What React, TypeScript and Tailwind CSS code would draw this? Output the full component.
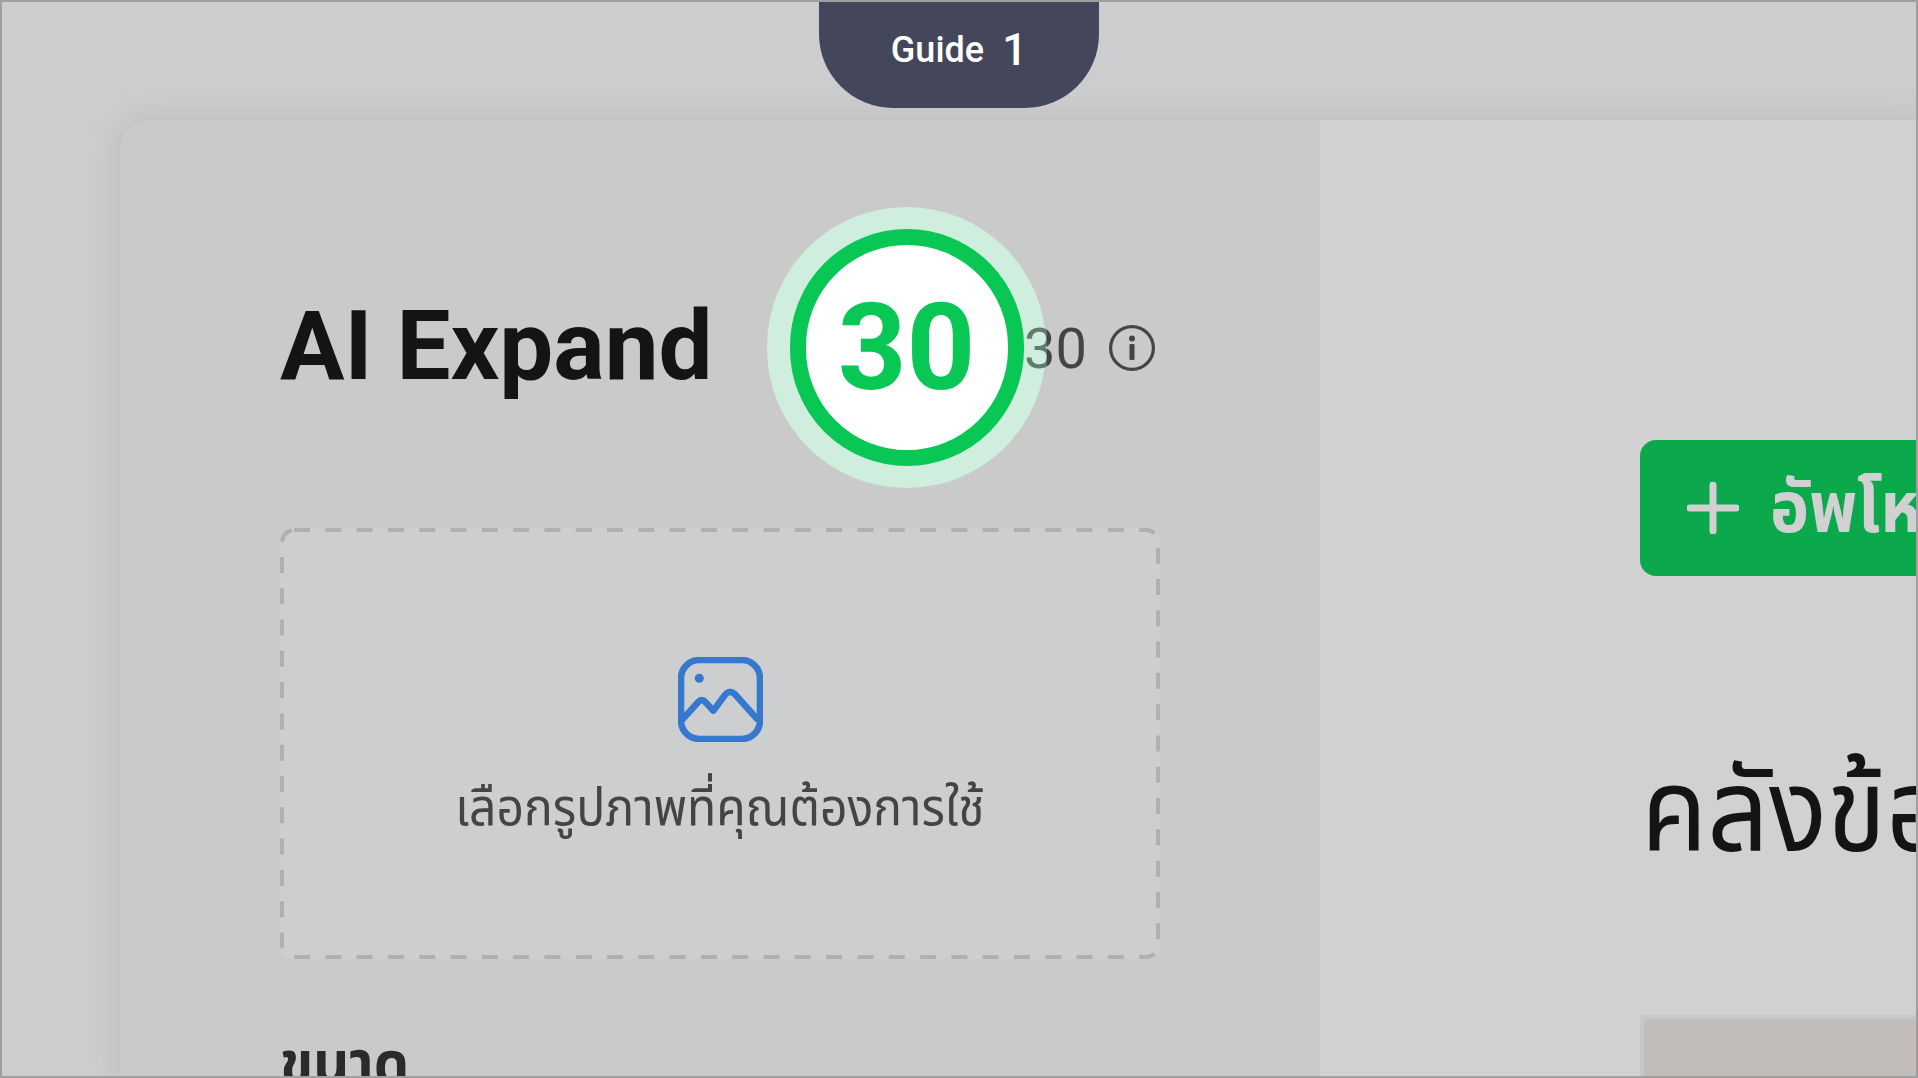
export default function App() {
  const thai = { fontFamily: '"Noto Sans Thai", "Noto Sans", "Noto Sans CJK SC", "DejaVu Sans", sans-serif' }

  return (
    <div className="w-[1918px] h-[1078px] overflow-hidden border-2 border-[#9f9f9f] bg-[#cdcdcf] font-['Roboto',sans-serif]">
      {/* guide tab */}
      <div className="flex justify-center">
        <div className="w-[280px] h-[106px] bg-[#44475c] rounded-b-[74px] flex items-center justify-center gap-[18px] text-white pb-[10px]">
          <span className="text-[36px] font-medium leading-none">Guide</span>
          <span className="text-[44px] font-medium leading-none">1</span>
        </div>
      </div>

      <div className="mt-[12px] ml-[118px] w-[1800px] h-[960px] flex rounded-tl-[30px] shadow-[0_0_30px_rgba(150,150,160,0.35)]">
        {/* left panel */}
        <div className="w-[1200px] shrink-0 bg-[#cacaca] rounded-tl-[30px] pl-[160px] pt-[86px]">
          <div className="flex items-center h-[282px]">
            <h1 className="w-[487px] mb-[3px] text-[#141414] text-[96px] font-bold leading-none">AI Expand</h1>
            <div className="w-[279px] h-[281px] rounded-full bg-[#d0eede] flex items-center justify-center">
              <div className="w-[234px] h-[237px] rounded-full border-[16px] border-[#08c755] bg-white flex items-center justify-center pt-[2px]">
                <span className="text-[#08c755] text-[120px] font-bold leading-none">30</span>
              </div>
            </div>
            <span className="relative ml-[-22px] mt-[3px] text-[56px] leading-none text-transparent bg-clip-text bg-[linear-gradient(90deg,#5f7d6c_23px,#444444_23px)]">30</span>
            <svg className="ml-[22px] mt-[1px]" width="46" height="46" viewBox="0 0 46 46" fill="none">
              <circle cx="23" cy="23" r="21.4" stroke="#444444" strokeWidth="3.2" />
              <circle cx="23" cy="13.5" r="3" fill="#444444" />
              <rect x="20.5" y="19" width="5" height="16" rx="1" fill="#444444" />
            </svg>
          </div>

          {/* upload box */}
          <div className="relative mt-[40px] w-[880px] h-[431px] rounded-[14px] bg-[#cdced0] flex flex-col items-center pt-[129px]">
            <svg className="absolute inset-0" width="880" height="431" fill="none">
              <rect x="2" y="2" width="876" height="427" rx="12" stroke="#b0b0b0" strokeWidth="4" strokeDasharray="16 15.3" />
            </svg>
            <svg width="85" height="85" viewBox="0 0 84 84" fill="none" stroke="#3778cf" strokeWidth="6.5" strokeLinecap="round" strokeLinejoin="round">
              <rect x="3" y="3" width="78" height="78" rx="18" />
              <path d="M5 61L20 44.500C22 42 25 42 27 44.500L35 53L46 38C49 33.500 53 33.500 56.500 37L78 61" />
              <circle cx="21" cy="21" r="4.500" fill="#3778cf" stroke="none" />
            </svg>
            <p style={thai} className="mt-[36px] scale-y-[1.07] text-[#444444] text-[48px] leading-[64px] whitespace-nowrap">
              เลือกรูปภาพที่คุณต้องการใช้
            </p>
          </div>

          <h2 style={thai} className="mt-[72px] scale-y-[1.07] text-[#2b2b2b] text-[56px] font-bold leading-[70px]">ขนาด</h2>
        </div>

        {/* right panel */}
        <div className="flex-1 min-w-0 bg-[#d1d1d1] pl-[320px] pt-[320px] overflow-hidden">
          <div className="w-[400px] h-[136px] rounded-[16px] bg-[#0ca84c] flex items-center pl-[47px] gap-[31px] text-[#d1d1d1]">
            <svg className="shrink-0" width="52" height="52" viewBox="0 0 52 52" fill="none" stroke="#d1d1d1" strokeWidth="7" strokeLinecap="round">
              <path d="M26 3V49M3 26H49" />
            </svg>
            <span style={thai} className="scale-y-[1.07] origin-top text-[66px] font-bold leading-none whitespace-nowrap">อัพโหลด</span>
          </div>
          <h2 style={thai} className="mt-[170px] ml-[1px] scale-y-[1.07] origin-top-left text-[#141414] text-[108px] leading-[130px] whitespace-nowrap">คลังข้อมูล</h2>
          <div className="mt-[139px] w-[400px] h-[200px] border-[4px] border-[#c8c8c8] bg-[#c2bdb8]" />
        </div>
      </div>
    </div>
  )
}
